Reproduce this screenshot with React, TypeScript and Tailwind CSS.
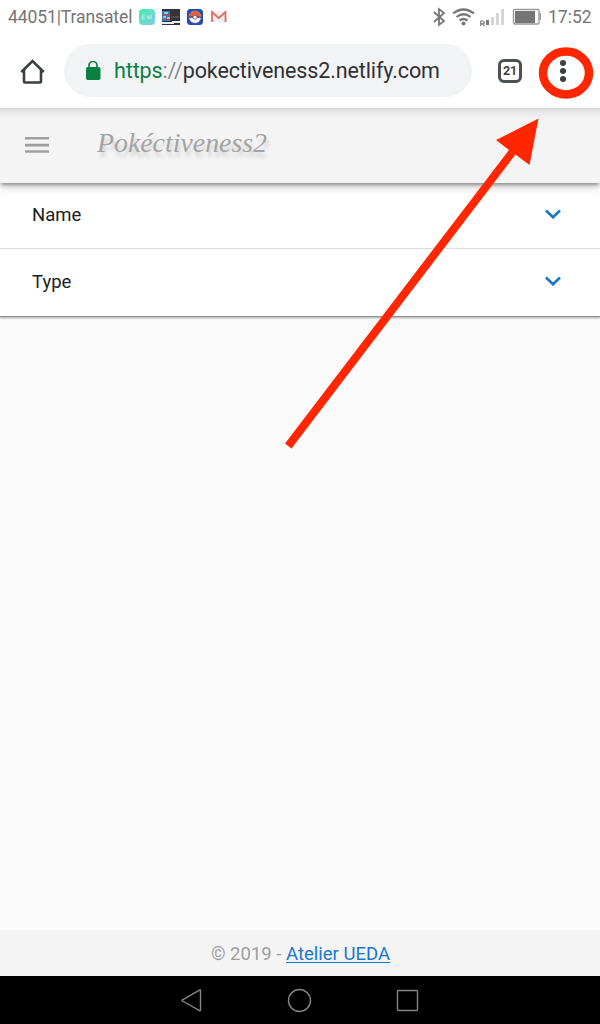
import React from "react";

function StatusBar() {
  return (
    <div className="flex h-[34px] shrink-0 items-center bg-white pl-2 pr-2 text-[17.500px] text-[#757575]">
      <span className="w-[131px] whitespace-nowrap pt-px tracking-[-0.1px]">44051|Transatel</span>
      <svg className="h-4 w-[90px] shrink-0" viewBox="0 0 90 16">
        <defs>
          <linearGradient id="mint" x1="0" y1="0" x2="1" y2="1">
            <stop offset="0" stopColor="#46efab" />
            <stop offset="1" stopColor="#82cce8" />
          </linearGradient>
          <radialGradient id="sky">
            <stop offset="0" stopColor="#4f99eb" />
            <stop offset="1" stopColor="#2448ae" />
          </radialGradient>
        </defs>
        <rect width="16" height="16" rx="4" fill="url(#mint)" />
        <path d="M6 6H3.500v4H6M3.500 8H6M7 8h2m0-2 1 4 1-3m1-1v4" fill="none" stroke="#c7f5ed" strokeWidth="0.7" />
        <rect x="23" y="0" width="18" height="16" fill="#343237" />
        <path d="M23 2h8v10h-8z" fill="#3d77b8" />
        <path d="M25 3h4v2h-4zM24 7h3v2h-3zM28 8h3v2h-3z" fill="#9bc7e5" />
        <path d="M25 5h5v1h-5zM25 10h5v1h-5z" fill="#cc4054" />
        <path d="M23 13h10v-1h8v2h-6v1H23z" fill="#eee" />
        <path d="M32 8h8" stroke="#696969" />
        <rect x="48" width="16" height="16" rx="3.500" fill="url(#sky)" />
        <circle cx="56" cy="8" r="6" fill="#fff2ea" />
        <path d="M50 8a6 6 0 0 1 12 0z" fill="#e55f39" />
        <path d="M50 8.200h12" stroke="#403e55" strokeWidth="1.200" />
        <circle cx="56" cy="8.200" r="2" fill="#fff" stroke="#46445a" strokeWidth="0.7" />
        <rect x="72" y="2" width="15.500" height="11" rx="1" fill="#efefef" />
        <path d="m74 13 5.800-5.500L85.500 13" fill="none" stroke="#d3d3d3" strokeWidth="0.7" />
        <path d="M73 13V3l6.800 6L86.500 3v10" fill="none" stroke="#df6d65" strokeWidth="1.800" />
      </svg>
      <span className="grow" />
      <svg className="mr-[7px] h-[22px] w-[109px] shrink-0" viewBox="432 5 109 22" fill="none">
        <path d="m434 11 10 9-5 4V8l5 4-10 9" stroke="#777" strokeWidth="1.800" />
        <path d="M453 12.500q10.500-8 21 0M456.500 16q7-5.500 14 0M459.500 19.500q4-3 8 0" stroke="#777" strokeWidth="2.200" />
        <circle cx="463.500" cy="22.500" r="2" fill="#777" />
        <path d="M480.800 25v-5h2q1.500 0 1.500 1.400t-1.500 1.400h-2m2 0 1.700 2.200" stroke="#777" strokeWidth="1.200" />
        <path d="M486 19h3v5h-3z" fill="#777" />
        <path d="M491 16h3v8h-3zM496 12h3v12h-3zM501 8h3v16h-3z" fill="#d5d5d5" />
        <rect x="513.500" y="8.500" width="25.500" height="14.500" rx="1.500" stroke="#999" strokeWidth="1.400" />
        <path d="M515 10h20v12h-20z" fill="#757575" />
        <path d="M540.300 12v7" stroke="#999" strokeWidth="1.400" />
      </svg>
      <span className="w-[44px] whitespace-nowrap pt-px">17:52</span>
    </div>
  );
}

function BrowserBar() {
  return (
    <div className="flex h-[74px] shrink-0 items-start bg-white pt-[10px]">
      <svg className="ml-5 mt-[14px] h-[26px] w-[25px]" viewBox="20 58 25 26" fill="none" stroke="#3c4043" strokeWidth="2.600">
        <path d="M21.300 72 32.500 61l11.200 11M24 70v11.500q0 1 .8 1h15.400q.8 0 .8-1V70" />
      </svg>
      <div className="ml-[19px] flex h-[53px] w-[408px] items-center rounded-full bg-[#f1f3f4] pl-[21px]">
        <svg className="mt-px h-[20px] w-4 shrink-0" viewBox="85 61 16 20">
          <path d="M89 68v-2.500a4 4 0 0 1 8 0V68" fill="none" stroke="#0b8043" strokeWidth="1.700" />
          <rect x="86" y="67" width="14.500" height="13" rx="1.700" fill="#0b8043" />
        </svg>
        <span className="ml-[13px] mt-[2px] whitespace-nowrap text-[21.500px] tracking-[-0.12px] text-[#303134]">
          <span className="text-[#0b8043]">https</span><span className="text-[#888b8d]">://</span>pokectiveness2.netlify.com
        </span>
      </div>
      <div className="ml-[26px] mt-[15px] flex h-6 w-6 items-center justify-center rounded-[6px] border-[3px] border-[#4c5053] text-[12.500px] font-bold leading-none tracking-[-0.2px] text-[#3c4043]">21</div>
      <div className="ml-[38px] mt-[16px] flex w-[6px] flex-col gap-[2px]">
        <span className="h-[6px] w-[6px] rounded-full bg-[#3c4043]" />
        <span className="h-[6px] w-[6px] rounded-full bg-[#3c4043]" />
        <span className="h-[6px] w-[6px] rounded-full bg-[#3c4043]" />
      </div>
    </div>
  );
}

function AccordionRow({ label }: { label: string }) {
  return (
    <div className="flex grow items-center justify-between pb-[3px] pl-8 pr-[38px] text-[18.500px] text-[#212121]">
      <span className="pt-[3px]">{label}</span>
      <svg className="h-[10px] w-[18px]" viewBox="0 0 18 10" fill="none" stroke="#1976d2" strokeWidth="2.600">
        <path d="m2 1.500 7 6.800 7-6.800" />
      </svg>
    </div>
  );
}

export default function App() {
  return (
    <div className="relative flex h-[1024px] w-[600px] flex-col overflow-hidden bg-[#fafafa] font-['Roboto',sans-serif]">
      <StatusBar />
      <BrowserBar />
      <header className="z-10 flex h-[75px] shrink-0 items-center bg-[#f4f4f4] bg-[linear-gradient(to_bottom,#d4d4d4_0px,#e6e6e6_3px,#f4f4f4_11px)] pl-[25px] shadow-[0_3px_4px_-1px_rgba(0,0,0,0.4),0_5px_10px_rgba(0,0,0,0.13)]">
        <svg className="mb-px h-[18px] w-[24px] shrink-0" viewBox="0 0 24 18" fill="#9e9e9e">
          <path d="M0 1h24v2.600H0zM0 7.800h24v2.600H0zM0 14.200h24v2.600H0z" />
        </svg>
        <svg className="ml-[46px] h-[50px] w-[190px] overflow-visible" viewBox="95 120 190 50">
          <text x="97" y="151" textLength="170" lengthAdjust="spacingAndGlyphs" fill="#a3a3a3" className="font-['Liberation_Serif',serif] text-[28px] italic [text-shadow:2px_5px_4px_rgba(0,0,0,0.14)]">Pokéctiveness2</text>
        </svg>
      </header>
      <section className="flex h-[134px] shrink-0 flex-col border-b border-[#929292] bg-white shadow-[0_1px_2px_rgba(0,0,0,0.35)]">
        <div className="flex h-[66px] border-b border-[#dedede]">
          <AccordionRow label="Name" />
        </div>
        <div className="flex h-[67px]">
          <AccordionRow label="Type" />
        </div>
      </section>
      <main className="grow" />
      <footer className="flex h-[46px] shrink-0 items-center justify-center bg-[#f4f4f4] text-[18.500px] text-[#9e9e9e]">
        <span className="pl-px pt-[3px]">© 2019 - <a className="text-[#1976d2] underline decoration-1 underline-offset-2">Atelier UEDA</a></span>
      </footer>
      <nav className="flex h-[48px] shrink-0 bg-black">
        <svg className="h-12 w-full" viewBox="0 976 600 48" fill="none" stroke="#858585" strokeWidth="1.400">
          <path d="M200.500 990v20q0 1-1 .6L182.500 1001q-1-.6 0-1.200l17-9.600q1-.6 1-.2z" />
          <circle cx="299.500" cy="1000.500" r="11" />
          <rect x="397.500" y="990.500" width="20" height="20" rx="1" />
        </svg>
      </nav>
      <svg className="pointer-events-none absolute inset-0 z-20 h-[1024px] w-[600px]" viewBox="0 0 600 1024">
        <ellipse cx="566" cy="73" rx="23" ry="21.500" fill="none" stroke="#ff2600" strokeWidth="8.500" />
        <path d="m538.500 118.500-9 46.500-14-10.500L291.500 448.500l-6.500-5L509 150l-13-10z" fill="#ff2600" />
      </svg>
    </div>
  );
}
